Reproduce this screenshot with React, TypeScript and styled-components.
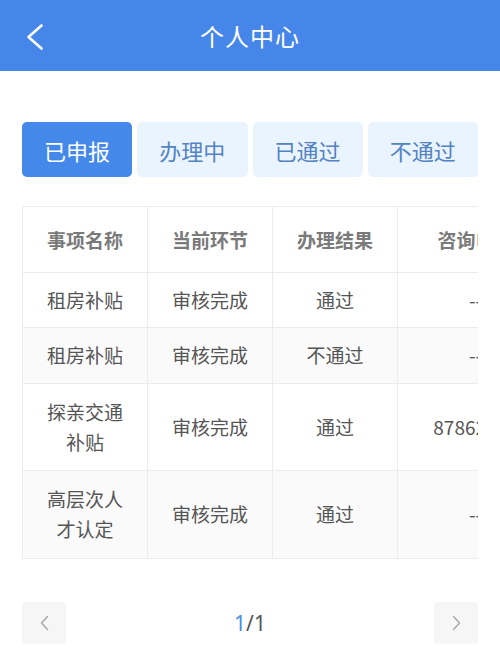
import { createGlobalStyle, styled } from "styled-components";

const GlobalStyle = createGlobalStyle`
    body {
        margin: 0;
        background: #fff;
        font-family: "Noto Sans CJK SC", "Noto Sans", sans-serif;
    }
`;

const Page = styled.div`
    width: 500px;
    min-height: 659px;
    background: #fff;
`;

const Header = styled.header`
    position: relative;
    height: 71px;
    background: #4786e9;
    display: flex;
    align-items: center;
    justify-content: center;
    color: #fff;
`;

const BackButton = styled.button`
    position: absolute;
    left: 22px;
    top: 22px;
    width: 26px;
    height: 30px;
    padding: 0;
    border: none;
    background: none;
    display: flex;
    align-items: center;
    justify-content: center;
`;

const Title = styled.h1`
    margin: 0;
    font-size: 24px;
    font-weight: 400;
    letter-spacing: 1px;
`;

const Body = styled.main`
    padding: 51px 22px 0;
`;

const Tabs = styled.div`
    display: grid;
    grid-template-columns: repeat(4, 1fr);
    gap: 5px;
`;

const Tab = styled.button<{ $active?: boolean }>`
    height: 55px;
    border: none;
    border-radius: 5px;
    font-family: inherit;
    font-size: 22px;
    background: ${(p) => (p.$active ? "#4489ea" : "#eaf4fe")};
    color: ${(p) => (p.$active ? "#fff" : "#5283c3")};
`;

const TableWrap = styled.div`
    margin-top: 29px;
    width: 456px;
    overflow: hidden;
`;

const Table = styled.table`
    border-collapse: collapse;
    table-layout: fixed;
    width: 531px;
    border: 1px solid #ececec;
`;

const Th = styled.th`
    height: 64.5px;
    padding: 0 20px;
    font-size: 19px;
    font-weight: 600;
    color: #7a7a7a;
    border: 1px solid #ececec;
    white-space: nowrap;
`;

const Tr = styled.tr<{ $striped?: boolean }>`
    background: ${(p) => (p.$striped ? "#fafafa" : "#fff")};
`;

const Td = styled.td<{ $tall?: boolean }>`
    height: ${(p) => (p.$tall ? "86.5px" : "54.5px")};
    padding: 0 20px;
    font-size: 19px;
    line-height: 30px;
    color: #555;
    text-align: center;
    border: 1px solid #ececec;
`;

const PhoneTd = styled(Td)`
    white-space: nowrap;
`;

const Pager = styled.div`
    margin-top: 43px;
    display: flex;
    align-items: center;
    justify-content: space-between;
`;

const PageButton = styled.button`
    width: 44px;
    height: 42px;
    border: none;
    border-radius: 4px;
    background: #f6f6f6;
    padding: 0;
    display: flex;
    align-items: center;
    justify-content: center;
`;

const PageText = styled.span`
    font-family: "Noto Sans", sans-serif;
    font-size: 21px;
    color: #555;
`;

const Current = styled.span`
    color: #4a90e2;
`;

const Chevron = ({ dir, color, w, h, sw }: { dir: "left" | "right"; color: string; w: number; h: number; sw: number }) => (
    <svg width={w} height={h} viewBox={`0 0 ${w} ${h}`} fill="none">
        <path
            d={dir === "left" ? `M${w - 1.5} 1.5 L1.5 ${h / 2} L${w - 1.5} ${h - 1.5}` : `M1.5 1.5 L${w - 1.5} ${h / 2} L1.5 ${h - 1.5}`}
            stroke={color}
            strokeWidth={sw}
            strokeLinecap="round"
            strokeLinejoin="round"
        />
    </svg>
);

const rows = [
    { name: "租房补贴", step: "审核完成", result: "通过", phone: "--" },
    { name: "租房补贴", step: "审核完成", result: "不通过", phone: "--" },
    { name: "探亲交通补贴", step: "审核完成", result: "通过", phone: "87862888", tall: true },
    { name: "高层次人才认定", step: "审核完成", result: "通过", phone: "--", tall: true },
];

const tabs = ["已申报", "办理中", "已通过", "不通过"];

const App: React.FC = () => {
    return (
        <Page>
            <GlobalStyle />
            <Header>
                <BackButton>
                    <Chevron dir="left" color="#fff" w={16} h={26} sw={2.6} />
                </BackButton>
                <Title>个人中心</Title>
            </Header>
            <Body>
                <Tabs>
                    {tabs.map((t, i) => (
                        <Tab key={t} $active={i === 0}>{t}</Tab>
                    ))}
                </Tabs>
                <TableWrap>
                    <Table>
                        <colgroup>
                            <col style={{ width: 125 }} />
                            <col style={{ width: 125 }} />
                            <col style={{ width: 125 }} />
                            <col style={{ width: 156 }} />
                        </colgroup>
                        <thead>
                            <tr>
                                <Th>事项名称</Th>
                                <Th>当前环节</Th>
                                <Th>办理结果</Th>
                                <Th>咨询电话</Th>
                            </tr>
                        </thead>
                        <tbody>
                            {rows.map((r, i) => (
                                <Tr key={i} $striped={i % 2 === 1}>
                                    <Td $tall={r.tall}>{r.name}</Td>
                                    <Td $tall={r.tall}>{r.step}</Td>
                                    <Td $tall={r.tall}>{r.result}</Td>
                                    <PhoneTd $tall={r.tall}>{r.phone}</PhoneTd>
                                </Tr>
                            ))}
                        </tbody>
                    </Table>
                </TableWrap>
                <Pager>
                    <PageButton>
                        <Chevron dir="left" color="#a8a8a8" w={9} h={16} sw={1.4} />
                    </PageButton>
                    <PageText>
                        <Current>1</Current>/1
                    </PageText>
                    <PageButton>
                        <Chevron dir="right" color="#a8a8a8" w={9} h={16} sw={1.4} />
                    </PageButton>
                </Pager>
            </Body>
        </Page>
    );
};

export default App;
